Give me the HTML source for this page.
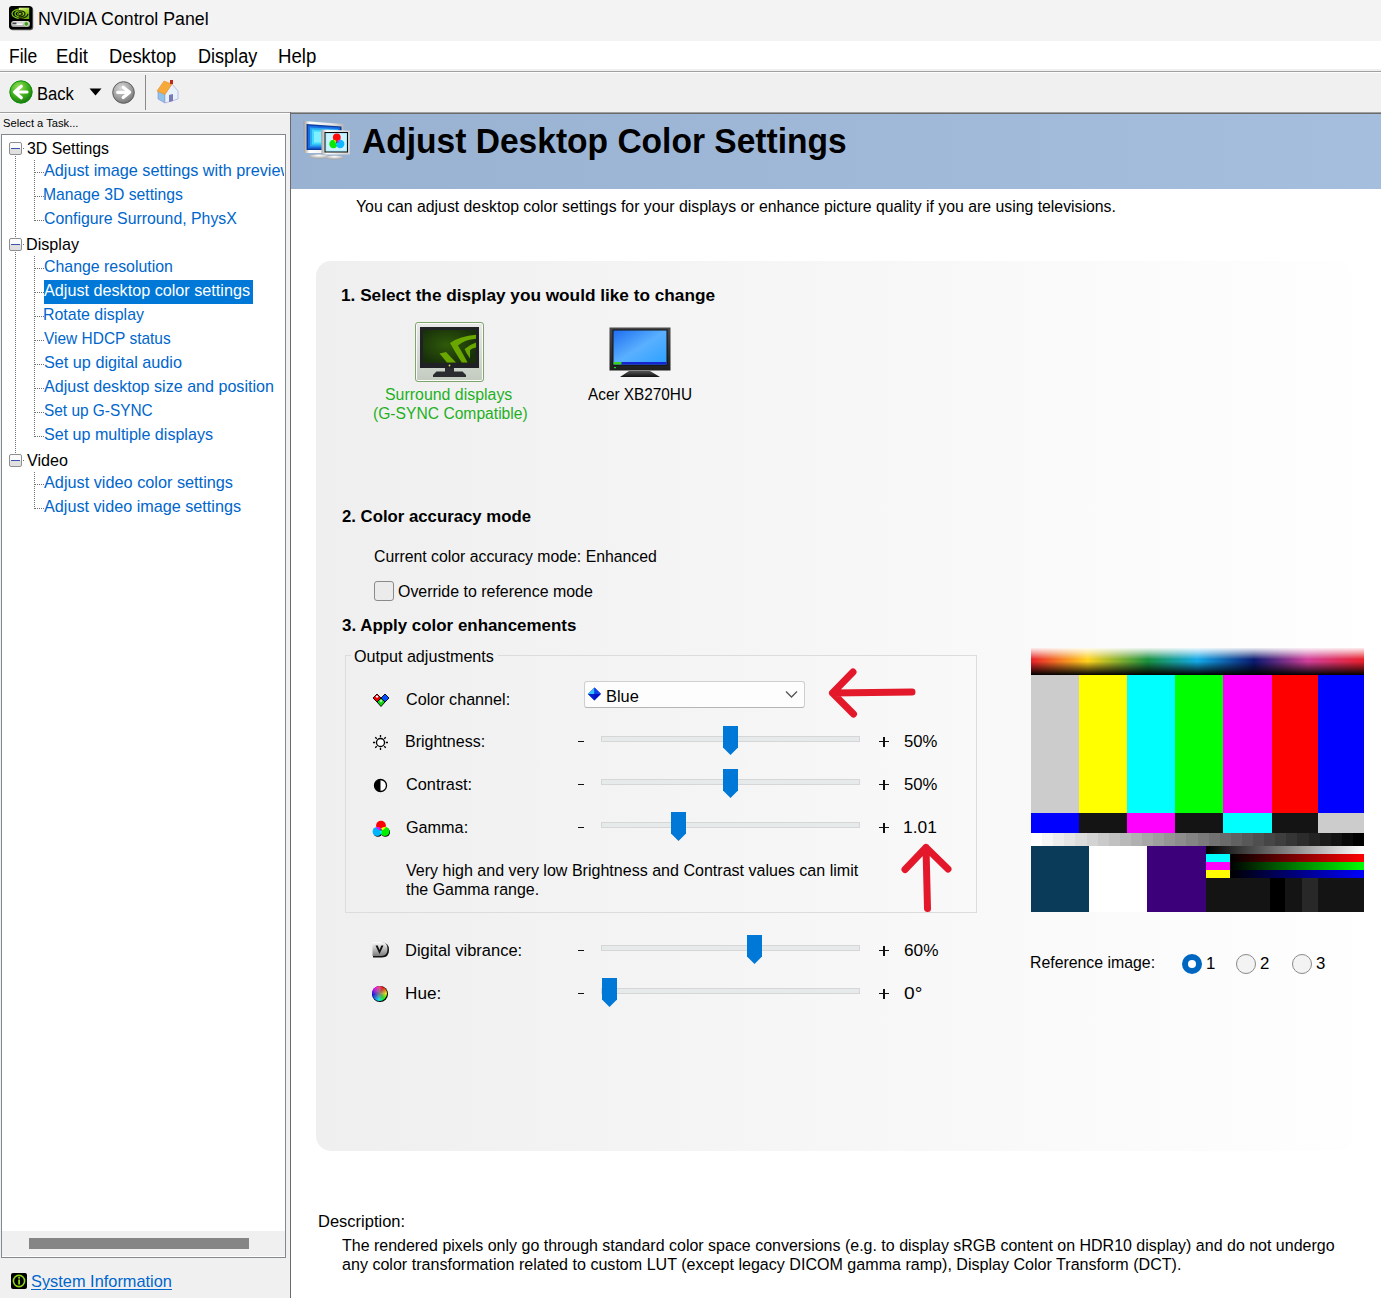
<!DOCTYPE html>
<html><head><meta charset="utf-8"><title>NVIDIA Control Panel</title>
<style>
html,body{margin:0;padding:0;}
body{width:1381px;height:1298px;overflow:hidden;position:relative;background:#f0f0f0;font-family:"Liberation Sans",sans-serif;}
.r{position:absolute;box-sizing:content-box;}
.t{position:absolute;white-space:nowrap;line-height:1;transform-origin:0 0;}
</style></head><body>
<div class="r" style="left:0px;top:0px;width:1381px;height:41px;background:#f3f3f3"></div>
<div class="r" style="left:0px;top:41px;width:1381px;height:28px;background:#fff"></div>
<div class="r" style="left:0px;top:69px;width:1381px;height:2px;background:#f0f0f0"></div>
<div class="r" style="left:0px;top:71px;width:1381px;height:1px;background:#a0a0a0"></div>
<div class="r" style="left:0px;top:72px;width:1381px;height:1px;background:#fdfdfd"></div>
<div class="r" style="left:0px;top:73px;width:1381px;height:39px;background:#f0f0f0"></div>
<div class="r" style="left:0px;top:112px;width:1381px;height:1px;background:#a0a0a0"></div>
<div class="r" style="left:0px;top:113px;width:290px;height:1px;background:#fdfdfd"></div>
<svg class="r" style="left:9px;top:6px" width="25" height="25" viewBox="0 0 25 25">
<defs><linearGradient id="nvb" x1="0" y1="0" x2="0.3" y2="1"><stop offset="0" stop-color="#e8f8b0"/><stop offset="0.45" stop-color="#9ad020"/><stop offset="1" stop-color="#6cb000"/></linearGradient>
<linearGradient id="nvg" x1="0" y1="0" x2="0" y2="1"><stop offset="0" stop-color="#e8e8e8"/><stop offset="1" stop-color="#a0a0a0"/></linearGradient>
<clipPath id="nvc"><rect x="9.8" y="1.7" width="10.4" height="11.3"/></clipPath>
<clipPath id="nvl"><rect x="1.5" y="1.7" width="8.3" height="11.3"/></clipPath></defs>
<rect x="0.8" y="0.8" width="23.4" height="23.4" rx="3" fill="#5a5a5a"/>
<rect x="0" y="0" width="23.2" height="23.2" rx="3" fill="#000"/>
<rect x="9.8" y="1.7" width="10.4" height="11.3" fill="url(#nvb)"/>
<g fill="none" stroke-width="1.3">
<g clip-path="url(#nvl)" stroke="#78c010"><ellipse cx="11" cy="7.8" rx="8" ry="4.6"/><ellipse cx="11" cy="7.8" rx="5" ry="3"/><ellipse cx="11" cy="7.8" rx="2.2" ry="1.5"/></g>
<g clip-path="url(#nvc)" stroke="#1a2400"><path d="M3 7.8 A8 4.6 0 0 0 19 7.8"/><ellipse cx="11" cy="7.8" rx="5" ry="3"/><ellipse cx="11" cy="7.8" rx="2.2" ry="1.5"/></g>
</g>
<rect x="2.2" y="15" width="18.7" height="6" rx="2.5" fill="url(#nvg)"/>
<rect x="3.5" y="16.5" width="4" height="1.5" fill="#444"/><rect x="7.5" y="17.5" width="6" height="1.5" fill="#fff"/>
<circle cx="17.3" cy="17.9" r="2.3" fill="#3aa020" stroke="#dde4b8" stroke-width="0.8"/>
</svg>
<span id="t0" class="t" style="left:38.1px;top:8.75px;font-size:19.20px;font-weight:400;color:#000;transform:scaleX(0.9247);">NVIDIA Control Panel</span>
<span id="t1" class="t" style="left:9.1px;top:47.49px;font-size:19.50px;font-weight:400;color:#000;transform:scaleX(0.8960);">File</span>
<span id="t2" class="t" style="left:56.1px;top:47.49px;font-size:19.50px;font-weight:400;color:#000;transform:scaleX(0.9493);">Edit</span>
<span id="t3" class="t" style="left:109.1px;top:47.49px;font-size:19.50px;font-weight:400;color:#000;transform:scaleX(0.9407);">Desktop</span>
<span id="t4" class="t" style="left:198.1px;top:47.49px;font-size:19.50px;font-weight:400;color:#000;transform:scaleX(0.9258);">Display</span>
<span id="t5" class="t" style="left:278.0px;top:47.49px;font-size:19.50px;font-weight:400;color:#000;transform:scaleX(0.9552);">Help</span>
<svg class="r" style="left:9px;top:80px" width="24" height="24" viewBox="0 0 24 24">
<defs><radialGradient id="gb" cx="40%" cy="30%" r="70%"><stop offset="0" stop-color="#9be35a"/><stop offset="0.6" stop-color="#3fae1c"/><stop offset="1" stop-color="#1c7a10"/></radialGradient></defs>
<circle cx="12" cy="12" r="11.2" fill="url(#gb)" stroke="#109010" stroke-width="1"/>
<path d="M5.6 12 L12.3 6.3 M5.6 12 L12.3 17.7 M5.6 12 L18 12" stroke="#fff" stroke-width="3.2" stroke-linecap="round" stroke-linejoin="round" fill="none"/>
</svg>
<span id="t6" class="t" style="left:36.6px;top:85.09px;font-size:18.80px;font-weight:400;color:#000;transform:scaleX(0.8824);">Back</span>
<svg class="r" style="left:89px;top:88px" width="13" height="8" viewBox="0 0 13 8"><path d="M0.5 0.5 L12.5 0.5 L6.5 7.5 Z" fill="#000"/></svg>
<svg class="r" style="left:112px;top:81px" width="23" height="23" viewBox="0 0 23 23">
<defs><radialGradient id="gg" cx="40%" cy="30%" r="75%"><stop offset="0" stop-color="#d8d8d8"/><stop offset="0.6" stop-color="#a0a0a0"/><stop offset="1" stop-color="#6e6e6e"/></radialGradient></defs>
<circle cx="11.5" cy="11.5" r="10.8" fill="url(#gg)" stroke="#5e5e5e" stroke-width="1"/>
<path d="M17.6 11.3 L11.2 6.2 M17.6 11.3 L11.2 16.6 M17.6 11.3 L5.6 11.3" stroke="#fff" stroke-width="3.2" stroke-linecap="round" stroke-linejoin="round" fill="none"/>
</svg>
<div class="r" style="left:145px;top:75px;width:1px;height:35px;background:#8a8a8a"></div>
<svg class="r" style="left:154.5px;top:79px" width="25" height="25" viewBox="0 0 25 25">
<path d="M3 12 L3 20 L10 24 L10 15 Z" fill="#8fc4ea" stroke="#8a8ad0" stroke-width="0.6"/>
<path d="M10 15 L10 24 L23 20 L23 12 L17 5 Z" fill="#e8f2fb" stroke="#9a9ad6" stroke-width="0.6"/>
<path d="M14 23 L14 16 L18 15 L18 22 Z" fill="#7a7ab8"/>
<path d="M2 12 L10 15.5 L17 5 L9 2 Z" fill="#f7a93a" stroke="#e08a20" stroke-width="0.5"/>
<rect x="15" y="1" width="3" height="4" fill="#c0281a"/>
</svg>
<span id="t7" class="t" style="left:2.5px;top:118.35px;font-size:11.40px;font-weight:400;color:#000;transform:scaleX(0.9796);">Select a Task...</span>
<div class="r" style="left:1px;top:134px;width:285px;height:1124px;background:#828790"></div>
<div class="r" style="left:2px;top:135px;width:283px;height:1122px;background:#fff"></div>
<div class="r" style="left:2px;top:1231px;width:283px;height:25px;background:#f0f0f0"></div>
<div class="r" style="left:29px;top:1238px;width:220px;height:11px;background:#858585"></div>
<svg class="r" style="left:11px;top:1273px" width="16" height="16" viewBox="0 0 16 16">
<rect x="0" y="0" width="16" height="16" rx="2" fill="#000"/>
<circle cx="8" cy="8" r="5.6" fill="none" stroke="#8ed61a" stroke-width="1.6"/>
<rect x="7.2" y="6.5" width="1.8" height="5" fill="#8ed61a"/><rect x="7.2" y="4" width="1.8" height="1.6" fill="#8ed61a"/>
</svg>
<span id="t8" class="t" style="left:30.5px;top:1272.61px;font-size:17.00px;font-weight:400;color:#0066cc;transform:scaleX(0.9624);text-decoration:underline;text-underline-offset:2px;">System Information</span>
<div class="r" style="left:9px;top:142px;width:11px;height:11px;border:1px solid #8e8f8f;border-radius:2px;background:linear-gradient(#fbfbfb,#fbfbfb 45%,#e0e0e0 55%,#e0e0e0)"></div>
<div class="r" style="left:11px;top:148px;width:9px;height:1px;background:#3a55b0"></div>
<div class="r" style="left:23px;top:148px;width:1px;height:1px;background:#707070"></div>
<span id="t9" class="t" style="left:27.0px;top:139.61px;font-size:17.00px;font-weight:400;color:#000;transform:scaleX(0.9327);">3D Settings</span>
<div class="r" style="left:34px;top:160px;width:1px;height:61px;background:repeating-linear-gradient(to bottom,#707070 0 1px,transparent 1px 2px)"></div>
<div class="r" style="left:35px;top:172px;width:9px;height:1px;background:repeating-linear-gradient(to right,#707070 0 1px,transparent 1px 2px)"></div>
<div class="r" style="left:44px;top:160px;width:240px;height:24px;overflow:hidden">
<span id="t10" class="t" style="left:-0.3px;top:1.61px;font-size:17.00px;font-weight:400;color:#0066cc;transform:scaleX(0.9550);">Adjust image settings with preview</span>
</div>
<div class="r" style="left:35px;top:196px;width:9px;height:1px;background:repeating-linear-gradient(to right,#707070 0 1px,transparent 1px 2px)"></div>
<span id="t11" class="t" style="left:42.8px;top:185.61px;font-size:17.00px;font-weight:400;color:#0066cc;transform:scaleX(0.9252);">Manage 3D settings</span>
<div class="r" style="left:35px;top:220px;width:9px;height:1px;background:repeating-linear-gradient(to right,#707070 0 1px,transparent 1px 2px)"></div>
<span id="t12" class="t" style="left:43.7px;top:209.61px;font-size:17.00px;font-weight:400;color:#0066cc;transform:scaleX(0.9317);">Configure Surround, PhysX</span>
<div class="r" style="left:9px;top:238px;width:11px;height:11px;border:1px solid #8e8f8f;border-radius:2px;background:linear-gradient(#fbfbfb,#fbfbfb 45%,#e0e0e0 55%,#e0e0e0)"></div>
<div class="r" style="left:11px;top:244px;width:9px;height:1px;background:#3a55b0"></div>
<div class="r" style="left:23px;top:244px;width:1px;height:1px;background:#707070"></div>
<span id="t13" class="t" style="left:26.0px;top:235.61px;font-size:17.00px;font-weight:400;color:#000;transform:scaleX(0.9504);">Display</span>
<div class="r" style="left:34px;top:256px;width:1px;height:181px;background:repeating-linear-gradient(to bottom,#707070 0 1px,transparent 1px 2px)"></div>
<div class="r" style="left:35px;top:268px;width:9px;height:1px;background:repeating-linear-gradient(to right,#707070 0 1px,transparent 1px 2px)"></div>
<span id="t14" class="t" style="left:43.7px;top:257.61px;font-size:17.00px;font-weight:400;color:#0066cc;transform:scaleX(0.9343);">Change resolution</span>
<div class="r" style="left:35px;top:292px;width:9px;height:1px;background:repeating-linear-gradient(to right,#707070 0 1px,transparent 1px 2px)"></div>
<div class="r" style="left:44px;top:280px;width:209px;height:24px;background:#0078d7"></div>
<span id="t15" class="t" style="left:43.7px;top:281.61px;font-size:17.00px;font-weight:400;color:#fff;transform:scaleX(0.9519);">Adjust desktop color settings</span>
<div class="r" style="left:35px;top:316px;width:9px;height:1px;background:repeating-linear-gradient(to right,#707070 0 1px,transparent 1px 2px)"></div>
<span id="t16" class="t" style="left:42.8px;top:305.61px;font-size:17.00px;font-weight:400;color:#0066cc;transform:scaleX(0.9373);">Rotate display</span>
<div class="r" style="left:35px;top:340px;width:9px;height:1px;background:repeating-linear-gradient(to right,#707070 0 1px,transparent 1px 2px)"></div>
<span id="t17" class="t" style="left:43.7px;top:329.61px;font-size:17.00px;font-weight:400;color:#0066cc;transform:scaleX(0.9100);">View HDCP status</span>
<div class="r" style="left:35px;top:364px;width:9px;height:1px;background:repeating-linear-gradient(to right,#707070 0 1px,transparent 1px 2px)"></div>
<span id="t18" class="t" style="left:43.7px;top:353.61px;font-size:17.00px;font-weight:400;color:#0066cc;transform:scaleX(0.9538);">Set up digital audio</span>
<div class="r" style="left:35px;top:388px;width:9px;height:1px;background:repeating-linear-gradient(to right,#707070 0 1px,transparent 1px 2px)"></div>
<span id="t19" class="t" style="left:43.7px;top:377.61px;font-size:17.00px;font-weight:400;color:#0066cc;transform:scaleX(0.9467);">Adjust desktop size and position</span>
<div class="r" style="left:35px;top:412px;width:9px;height:1px;background:repeating-linear-gradient(to right,#707070 0 1px,transparent 1px 2px)"></div>
<span id="t20" class="t" style="left:43.7px;top:401.61px;font-size:17.00px;font-weight:400;color:#0066cc;transform:scaleX(0.9063);">Set up G-SYNC</span>
<div class="r" style="left:35px;top:436px;width:9px;height:1px;background:repeating-linear-gradient(to right,#707070 0 1px,transparent 1px 2px)"></div>
<span id="t21" class="t" style="left:43.7px;top:425.61px;font-size:17.00px;font-weight:400;color:#0066cc;transform:scaleX(0.9461);">Set up multiple displays</span>
<div class="r" style="left:9px;top:454px;width:11px;height:11px;border:1px solid #8e8f8f;border-radius:2px;background:linear-gradient(#fbfbfb,#fbfbfb 45%,#e0e0e0 55%,#e0e0e0)"></div>
<div class="r" style="left:11px;top:460px;width:9px;height:1px;background:#3a55b0"></div>
<div class="r" style="left:23px;top:460px;width:1px;height:1px;background:#707070"></div>
<span id="t22" class="t" style="left:27.0px;top:451.61px;font-size:17.00px;font-weight:400;color:#000;transform:scaleX(0.9481);">Video</span>
<div class="r" style="left:34px;top:472px;width:1px;height:37px;background:repeating-linear-gradient(to bottom,#707070 0 1px,transparent 1px 2px)"></div>
<div class="r" style="left:35px;top:484px;width:9px;height:1px;background:repeating-linear-gradient(to right,#707070 0 1px,transparent 1px 2px)"></div>
<span id="t23" class="t" style="left:43.7px;top:473.61px;font-size:17.00px;font-weight:400;color:#0066cc;transform:scaleX(0.9569);">Adjust video color settings</span>
<div class="r" style="left:35px;top:508px;width:9px;height:1px;background:repeating-linear-gradient(to right,#707070 0 1px,transparent 1px 2px)"></div>
<span id="t24" class="t" style="left:43.7px;top:497.61px;font-size:17.00px;font-weight:400;color:#0066cc;transform:scaleX(0.9518);">Adjust video image settings</span>
<div class="r" style="left:15px;top:156px;width:1px;height:82px;background:repeating-linear-gradient(to bottom,#707070 0 1px,transparent 1px 2px)"></div>
<div class="r" style="left:15px;top:252px;width:1px;height:202px;background:repeating-linear-gradient(to bottom,#707070 0 1px,transparent 1px 2px)"></div>
<div class="r" style="left:290px;top:112px;width:1px;height:1186px;background:#6b6b6b"></div>
<div class="r" style="left:291px;top:113px;width:1090px;height:1px;background:#6b6b6b"></div>
<div class="r" style="left:291px;top:114px;width:1090px;height:1184px;background:#fff"></div>
<div class="r" style="left:291px;top:114px;width:1090px;height:75px;background:linear-gradient(to right,#99b2d2,#a6bedd)"></div>
<svg class="r" style="left:300px;top:118px" width="55" height="45" viewBox="0 0 55 45">
<defs>
<linearGradient id="frm" x1="0" y1="0" x2="1" y2="0"><stop offset="0" stop-color="#9a9a9a"/><stop offset="0.15" stop-color="#ffffff"/><stop offset="0.7" stop-color="#e6e6e6"/><stop offset="1" stop-color="#b8b8b8"/></linearGradient>
<linearGradient id="frm2" x1="0" y1="0" x2="1" y2="0"><stop offset="0" stop-color="#a0a0a0"/><stop offset="0.2" stop-color="#ffffff"/><stop offset="1" stop-color="#cfcfcf"/></linearGradient>
<radialGradient id="stnd" cx="50%" cy="30%" r="60%"><stop offset="0" stop-color="#ffffff"/><stop offset="1" stop-color="#a8a8a8"/></radialGradient>
</defs>
<ellipse cx="19" cy="38.5" rx="10" ry="2.2" fill="url(#stnd)"/>
<path d="M3.5 3 L43.5 6 L43.5 35 L4 35 Z" fill="url(#frm)"/>
<path d="M6.5 6 L41.5 8.5 L41.5 32 L6.5 32 Z" fill="#0a3a9a"/>
<path d="M8 7.5 L40 9.5 L40 30.5 L8 30.5 Z" fill="#1a6ae0"/>
<path d="M10 9.5 L38 11 L38 28.5 L10 28.5 Z" fill="#2aa8f0"/>
<path d="M12 11.5 L36 12.5 L36 26.5 L12 26.5 Z" fill="#3fd8ff"/>
<path d="M14 13.5 L34 14 L34 24.5 L14 24.5 Z" fill="#7ff0ff"/>
<ellipse cx="34.5" cy="39.5" rx="9" ry="2" fill="url(#stnd)"/>
<path d="M21 11.5 L50 12.5 L50 36.5 L21.5 36.5 Z" fill="url(#frm2)"/>
<rect x="24.5" y="14" width="23.5" height="20.5" fill="#0c0c0c"/>
<rect x="25.5" y="15" width="21.5" height="18.5" fill="#a8e8fa"/>
<rect x="26.5" y="16" width="19.5" height="16.5" fill="#c8f4ff"/>
<circle cx="36.8" cy="19.5" r="3.9" fill="#ff0a0a"/>
<circle cx="33.5" cy="26" r="4.2" fill="#08e808"/>
<circle cx="40.2" cy="26" r="4.2" fill="#10b8ff"/>
<path d="M33.5 21.8 A4.2 4.2 0 0 1 36.5 23.2 L35.5 25 Z" fill="#e0e000"/>
<path d="M40 21.8 A4.2 4.2 0 0 0 37 23.2 L38 25 Z" fill="#ff10ff"/>
<path d="M35.5 25.5 L38 25.5 L36.8 27.5 Z" fill="#00e8e8"/>
<path d="M35.8 23.5 L37.8 23.5 L36.8 25.5 Z" fill="#333"/>
</svg>
<span id="t25" class="t" style="left:362.0px;top:123.80px;font-size:34.50px;font-weight:700;color:#000;transform:scaleX(0.9725);">Adjust Desktop Color Settings</span>
<span id="t26" class="t" style="left:355.5px;top:199.46px;font-size:16.00px;font-weight:400;color:#000;transform:scaleX(0.9885);">You can adjust desktop color settings for your displays or enhance picture quality if you are using televisions.</span>
<div class="r" style="left:316px;top:261px;width:1036px;height:890px;border-radius:15px;background:linear-gradient(to right,#efefef,#fefefe)"></div>
<span id="t27" class="t" style="left:341.0px;top:286.61px;font-size:17.00px;font-weight:700;color:#000;transform:scaleX(1.0125);">1. Select the display you would like to change</span>
<div class="r" style="left:415px;top:322px;width:67px;height:58px;border:1px solid #7fa56b;border-radius:3px;box-shadow:inset 0 0 0 1px #fafafa;background:linear-gradient(#e8e8e8,#c3cbbf)"></div>
<svg class="r" style="left:420px;top:327px" width="60" height="51" viewBox="0 0 60 51">
<defs><radialGradient id="ng" cx="45%" cy="45%" r="60%"><stop offset="0" stop-color="#2f5a0a"/><stop offset="1" stop-color="#18300a"/></radialGradient></defs>
<rect x="0" y="0" width="59" height="41" fill="#1f2124"/>
<rect x="3" y="3" width="53" height="33" fill="url(#ng)"/>
<g fill="#6aa600">
<path d="M19.5 26.5 L26 25 L36 35.5 L27 35.5 Z"/>
<path d="M30 16 Q40 9 56 7.8 L56 11.8 Q45 12.5 38 18.6 Q43 27 47.6 35.5 L41.7 35.5 Q35 25 30 16 Z"/>
<path d="M44.6 21.9 Q49 18 56 15.5 L56 20.6 Q52 21.5 50 23 Q50 27 50 31.5 Q46 26 44.6 21.9 Z"/>
</g>
<circle cx="29.5" cy="38.5" r="0.9" fill="#c8e060"/>
<rect x="25" y="41" width="9" height="4" fill="#2a2c30"/>
<path d="M13 50 L13 48 L16.5 44.5 L42.5 44.5 L46 48 L46 50 Z" fill="#2a2c30"/>
</svg>
<span id="t28" class="t" style="left:384.5px;top:387.29px;font-size:15.60px;font-weight:400;color:#1fb01f;transform:scaleX(1.0198);">Surround displays</span>
<span id="t29" class="t" style="left:372.5px;top:406.29px;font-size:15.60px;font-weight:400;color:#1fb01f;transform:scaleX(1.0029);">(G-SYNC Compatible)</span>
<svg class="r" style="left:609px;top:327px" width="62" height="51" viewBox="0 0 62 51">
<defs><linearGradient id="bl" x1="0" y1="0" x2="1" y2="1"><stop offset="0" stop-color="#1f6ff0"/><stop offset="0.5" stop-color="#5ab0ff"/><stop offset="1" stop-color="#2aa0ff"/></linearGradient>
<linearGradient id="bz" x1="0" y1="0" x2="0" y2="1"><stop offset="0" stop-color="#4a4a4a"/><stop offset="1" stop-color="#1e1e1e"/></linearGradient>
<linearGradient id="st" x1="0" y1="0" x2="0" y2="1"><stop offset="0" stop-color="#555"/><stop offset="1" stop-color="#111"/></linearGradient></defs>
<rect x="0.5" y="0.5" width="61" height="43" fill="url(#bz)"/>
<rect x="3.5" y="2.5" width="55" height="36" fill="#111"/>
<rect x="4.5" y="3.5" width="53" height="34" fill="url(#bl)"/>
<rect x="4.5" y="35" width="53" height="2.5" fill="#1424d0"/>
<rect x="4.5" y="35" width="8" height="2.5" fill="#3ad21a"/>
<rect x="5" y="40" width="2" height="1.2" fill="#18e018"/>
<path d="M20 44 L41 44 L51 50 L11 50 Z" fill="url(#st)"/>
</svg>
<span id="t30" class="t" style="left:588.0px;top:386.96px;font-size:16.00px;font-weight:400;color:#000;transform:scaleX(0.9589);">Acer XB270HU</span>
<span id="t31" class="t" style="left:342.0px;top:507.61px;font-size:17.00px;font-weight:700;color:#000;transform:scaleX(0.9851);">2. Color accuracy mode</span>
<span id="t32" class="t" style="left:374.0px;top:549.28px;font-size:16.80px;font-weight:400;color:#000;transform:scaleX(0.9416);">Current color accuracy mode: Enhanced</span>
<div class="r" style="left:374px;top:581px;width:18px;height:18px;border:1px solid #8a8a8a;border-radius:3px;background:#ebebeb"></div>
<span id="t33" class="t" style="left:398.0px;top:583.78px;font-size:16.80px;font-weight:400;color:#000;transform:scaleX(0.9494);">Override to reference mode</span>
<span id="t34" class="t" style="left:342.0px;top:616.61px;font-size:17.00px;font-weight:700;color:#000;transform:scaleX(0.9948);">3. Apply color enhancements</span>
<div class="r" style="left:345px;top:655px;width:630px;height:256px;border:1px solid #dcdcdc"></div>
<div class="r" style="left:351px;top:650px;width:147px;height:10px;background:linear-gradient(to right,#f0f0f0,#f2f2f2)"></div>
<span id="t35" class="t" style="left:354.0px;top:648.78px;font-size:16.80px;font-weight:400;color:#000;transform:scaleX(0.9612);">Output adjustments</span>
<svg class="r" style="left:372px;top:693px" width="18" height="15" viewBox="0 0 18 15">
<path d="M5 1 L9 5 L5 9 L1 5 Z" fill="#e00" stroke="#000" stroke-width="0.9"/>
<path d="M5 2.2 L6.5 3.7 L5 5 L3.5 3.7Z" fill="#fff"/>
<path d="M13 1 L17 5 L13 9 L9 5 Z" fill="#0050ff" stroke="#000" stroke-width="0.9"/>
<path d="M9 5 L13 9 L9 13.5 L5 9 Z" fill="#10d010" stroke="#000" stroke-width="0.9"/>
<path d="M9 6.5 L10.5 8 L9 9.5 L7.5 8Z" fill="#b0ffb0"/>
</svg>
<span id="t36" class="t" style="left:406.0px;top:691.78px;font-size:16.80px;font-weight:400;color:#000;transform:scaleX(0.9624);">Color channel:</span>
<div class="r" style="left:584px;top:681px;width:219px;height:25px;border:1px solid #cfcfcf;border-bottom-color:#b5b5b5;border-radius:3px;background:#fdfdfd"></div>
<svg class="r" style="left:587px;top:687px" width="15" height="15" viewBox="0 0 15 15">
<path d="M7.5 0.5 L14 7 L7.5 13.5 L1 7 Z" fill="#0010c0"/>
<path d="M7.5 0.5 L7.5 7 L1 7 Z" fill="#30c0ff"/>
<path d="M7.5 0.5 L14 7 L7.5 7 Z" fill="#1040f0"/>
<path d="M1 7 L7.5 7 L7.5 13.5 Z" fill="#0020d0"/>
</svg>
<span id="t37" class="t" style="left:605.5px;top:688.78px;font-size:16.80px;font-weight:400;color:#000;transform:scaleX(0.9766);">Blue</span>
<svg class="r" style="left:785px;top:690px" width="13" height="9" viewBox="0 0 13 9"><path d="M1 1.5 L6.5 7 L12 1.5" fill="none" stroke="#555" stroke-width="1.3"/></svg>
<svg class="r" style="left:372px;top:734px" width="17" height="17" viewBox="0 0 17 17">
<circle cx="8.5" cy="8.5" r="4" fill="#fff" stroke="#000" stroke-width="1.3"/>
<g stroke="#000" stroke-width="1.3"><path d="M8.5 1 V3.2 M8.5 13.8 V16 M1 8.5 H3.2 M13.8 8.5 H16 M3.2 3.2 L4.8 4.8 M12.2 12.2 L13.8 13.8 M3.2 13.8 L4.8 12.2 M12.2 4.8 L13.8 3.2"/></g></svg>
<span id="t38" class="t" style="left:405.3px;top:733.78px;font-size:16.80px;font-weight:400;color:#000;transform:scaleX(0.9540);">Brightness:</span>
<div class="r" style="left:578px;top:741px;width:6px;height:1.4px;background:#111"></div>
<div class="r" style="left:601px;top:736px;width:257px;height:4px;border:1px solid #d6d6d6;background:#e7eaea"></div>
<svg class="r" style="left:723px;top:726px" width="15" height="29" viewBox="0 0 15 29"><path d="M0 0 H15 V21.5 L7.5 29 L0 21.5 Z" fill="#0078d7"/></svg>
<div class="r" style="left:879px;top:741.2px;width:10px;height:1.3px;background:#111"></div>
<div class="r" style="left:883.3px;top:737px;width:1.3px;height:10px;background:#111"></div>
<span id="t39" class="t" style="left:903.5px;top:733.78px;font-size:16.80px;font-weight:400;color:#000;transform:scaleX(0.9951);">50%</span>
<svg class="r" style="left:373px;top:778px" width="15" height="15" viewBox="0 0 15 15">
<circle cx="7.5" cy="7.5" r="6" fill="#fff" stroke="#000" stroke-width="1.3"/>
<path d="M7.5 1.5 A6 6 0 0 0 7.5 13.5 Z" fill="#000"/></svg>
<span id="t40" class="t" style="left:406.3px;top:776.78px;font-size:16.80px;font-weight:400;color:#000;transform:scaleX(0.9715);">Contrast:</span>
<div class="r" style="left:578px;top:784px;width:6px;height:1.4px;background:#111"></div>
<div class="r" style="left:601px;top:779px;width:257px;height:4px;border:1px solid #d6d6d6;background:#e7eaea"></div>
<svg class="r" style="left:723px;top:769px" width="15" height="29" viewBox="0 0 15 29"><path d="M0 0 H15 V21.5 L7.5 29 L0 21.5 Z" fill="#0078d7"/></svg>
<div class="r" style="left:879px;top:784.2px;width:10px;height:1.3px;background:#111"></div>
<div class="r" style="left:883.3px;top:780px;width:1.3px;height:10px;background:#111"></div>
<span id="t41" class="t" style="left:903.5px;top:776.78px;font-size:16.80px;font-weight:400;color:#000;transform:scaleX(0.9951);">50%</span>
<svg class="r" style="left:372px;top:820px" width="19" height="18" viewBox="0 0 19 18">
<defs><clipPath id="cR"><circle cx="9" cy="5.6" r="4.9"/></clipPath><clipPath id="cB"><circle cx="5.2" cy="11.5" r="4.6"/></clipPath></defs>
<circle cx="5.9" cy="12.2" r="4.6" fill="#000"/><circle cx="13.4" cy="12.2" r="4.6" fill="#000"/>
<circle cx="9" cy="5.6" r="4.9" fill="#ff0000"/>
<circle cx="5.2" cy="11.5" r="4.6" fill="#00b4ff"/>
<circle cx="12.8" cy="11.5" r="4.6" fill="#00f000"/>
<g clip-path="url(#cR)"><circle cx="5.2" cy="11.5" r="4.6" fill="#ff00ff"/><circle cx="12.8" cy="11.5" r="4.6" fill="#ffff00"/></g>
<g clip-path="url(#cB)"><circle cx="12.8" cy="11.5" r="4.6" fill="#00ffff"/></g>
<path d="M7.6 10.6 L9 8.4 L10.4 10.6 Z" fill="#404040"/>
</svg>
<span id="t42" class="t" style="left:406.3px;top:819.78px;font-size:16.80px;font-weight:400;color:#000;transform:scaleX(0.9658);">Gamma:</span>
<div class="r" style="left:578px;top:827px;width:6px;height:1.4px;background:#111"></div>
<div class="r" style="left:601px;top:822px;width:257px;height:4px;border:1px solid #d6d6d6;background:#e7eaea"></div>
<svg class="r" style="left:671px;top:812px" width="15" height="29" viewBox="0 0 15 29"><path d="M0 0 H15 V21.5 L7.5 29 L0 21.5 Z" fill="#0078d7"/></svg>
<div class="r" style="left:879px;top:827.2px;width:10px;height:1.3px;background:#111"></div>
<div class="r" style="left:883.3px;top:823px;width:1.3px;height:10px;background:#111"></div>
<span id="t43" class="t" style="left:902.5px;top:819.78px;font-size:16.80px;font-weight:400;color:#000;transform:scaleX(1.0374);">1.01</span>
<span id="t44" class="t" style="left:406.0px;top:862.78px;font-size:16.80px;font-weight:400;color:#000;transform:scaleX(0.9562);">Very high and very low Brightness and Contrast values can limit</span>
<span id="t45" class="t" style="left:406.0px;top:881.78px;font-size:16.80px;font-weight:400;color:#000;transform:scaleX(0.9515);">the Gamma range.</span>
<svg class="r" style="left:372px;top:941px" width="18" height="18" viewBox="0 0 18 18">
<defs><linearGradient id="dvg" x1="0" y1="0" x2="0" y2="1"><stop offset="0" stop-color="#ffffff"/><stop offset="1" stop-color="#7a7a7a"/></linearGradient></defs>
<path d="M1 1.5 H10 Q17 1.5 17 9 Q17 16.5 10 16.5 H1 Z" fill="#111"/>
<path d="M0.5 1 H9.5 Q15.5 1 15.5 8 Q15.5 15 9.5 15 H0.5 Z" fill="url(#dvg)"/>
<path d="M3.5 4.5 L7.5 13 L11.5 4.5 H9.3 L7.5 9 L5.7 4.5 Z" fill="#111"/>
</svg>
<span id="t46" class="t" style="left:405.3px;top:942.78px;font-size:16.80px;font-weight:400;color:#000;transform:scaleX(0.9811);">Digital vibrance:</span>
<div class="r" style="left:578px;top:950px;width:6px;height:1.4px;background:#111"></div>
<div class="r" style="left:601px;top:945px;width:257px;height:4px;border:1px solid #d6d6d6;background:#e7eaea"></div>
<svg class="r" style="left:747px;top:935px" width="15" height="29" viewBox="0 0 15 29"><path d="M0 0 H15 V21.5 L7.5 29 L0 21.5 Z" fill="#0078d7"/></svg>
<div class="r" style="left:879px;top:950.2px;width:10px;height:1.3px;background:#111"></div>
<div class="r" style="left:883.3px;top:946px;width:1.3px;height:10px;background:#111"></div>
<span id="t47" class="t" style="left:903.5px;top:942.78px;font-size:16.80px;font-weight:400;color:#000;transform:scaleX(1.0248);">60%</span>
<div class="r" style="left:372px;top:986px;width:16px;height:16px;border-radius:50%;background:#000"></div>
<div class="r" style="left:372px;top:986px;width:15px;height:15px;border-radius:50%;background:radial-gradient(circle,rgba(128,128,128,1) 0,rgba(128,128,128,0.55) 35%,rgba(128,128,128,0) 75%),conic-gradient(#ff4080 0deg,#ff0000 30deg,#ffff00 90deg,#00ff00 140deg,#00ffff 185deg,#0000ff 260deg,#ff00ff 320deg,#ff4080 360deg)"></div>
<span id="t48" class="t" style="left:405.3px;top:985.78px;font-size:16.80px;font-weight:400;color:#000;transform:scaleX(1.0212);">Hue:</span>
<div class="r" style="left:578px;top:993px;width:6px;height:1.4px;background:#111"></div>
<div class="r" style="left:601px;top:988px;width:257px;height:4px;border:1px solid #d6d6d6;background:#e7eaea"></div>
<svg class="r" style="left:602px;top:978px" width="15" height="29" viewBox="0 0 15 29"><path d="M0 0 H15 V21.5 L7.5 29 L0 21.5 Z" fill="#0078d7"/></svg>
<div class="r" style="left:879px;top:993.2px;width:10px;height:1.3px;background:#111"></div>
<div class="r" style="left:883.3px;top:989px;width:1.3px;height:10px;background:#111"></div>
<span id="t49" class="t" style="left:903.5px;top:985.78px;font-size:16.80px;font-weight:400;color:#000;transform:scaleX(1.1413);">0°</span>
<div class="r" style="left:1031px;top:648px;width:333px;height:27px;background:linear-gradient(to bottom,rgba(255,255,255,0.92) 0%,rgba(255,255,255,0.55) 18%,rgba(255,255,255,0) 42%,rgba(0,0,0,0) 50%,rgba(0,0,0,0.45) 72%,rgba(0,0,0,1) 100%),linear-gradient(to right,#e8202a,#ffd21e 17%,#1a9040 35%,#14a8e8 50%,#0a1a70 67%,#d0409a 83%,#e8202a)"></div>
<div class="r" style="left:1031px;top:675px;width:48px;height:138px;background:#cccccc"></div>
<div class="r" style="left:1031px;top:813px;width:48px;height:20px;background:#0000ff"></div>
<div class="r" style="left:1079px;top:675px;width:48px;height:138px;background:#ffff00"></div>
<div class="r" style="left:1079px;top:813px;width:48px;height:20px;background:#141414"></div>
<div class="r" style="left:1127px;top:675px;width:48px;height:138px;background:#00ffff"></div>
<div class="r" style="left:1127px;top:813px;width:48px;height:20px;background:#ff00ff"></div>
<div class="r" style="left:1175px;top:675px;width:48px;height:138px;background:#00ff00"></div>
<div class="r" style="left:1175px;top:813px;width:48px;height:20px;background:#141414"></div>
<div class="r" style="left:1223px;top:675px;width:49px;height:138px;background:#ff00ff"></div>
<div class="r" style="left:1223px;top:813px;width:49px;height:20px;background:#00ffff"></div>
<div class="r" style="left:1272px;top:675px;width:46px;height:138px;background:#ff0000"></div>
<div class="r" style="left:1272px;top:813px;width:46px;height:20px;background:#141414"></div>
<div class="r" style="left:1318px;top:675px;width:46px;height:138px;background:#0000ff"></div>
<div class="r" style="left:1318px;top:813px;width:46px;height:20px;background:#cccccc"></div>
<div class="r" style="left:1031.00px;top:833px;width:11.60px;height:13px;background:rgb(255,255,255)"></div>
<div class="r" style="left:1042.10px;top:833px;width:11.60px;height:13px;background:rgb(246,246,246)"></div>
<div class="r" style="left:1053.20px;top:833px;width:11.60px;height:13px;background:rgb(237,237,237)"></div>
<div class="r" style="left:1064.30px;top:833px;width:11.60px;height:13px;background:rgb(229,229,229)"></div>
<div class="r" style="left:1075.40px;top:833px;width:11.60px;height:13px;background:rgb(220,220,220)"></div>
<div class="r" style="left:1086.50px;top:833px;width:11.60px;height:13px;background:rgb(211,211,211)"></div>
<div class="r" style="left:1097.60px;top:833px;width:11.60px;height:13px;background:rgb(202,202,202)"></div>
<div class="r" style="left:1108.70px;top:833px;width:11.60px;height:13px;background:rgb(193,193,193)"></div>
<div class="r" style="left:1119.80px;top:833px;width:11.60px;height:13px;background:rgb(185,185,185)"></div>
<div class="r" style="left:1130.90px;top:833px;width:11.60px;height:13px;background:rgb(176,176,176)"></div>
<div class="r" style="left:1142.00px;top:833px;width:11.60px;height:13px;background:rgb(167,167,167)"></div>
<div class="r" style="left:1153.10px;top:833px;width:11.60px;height:13px;background:rgb(158,158,158)"></div>
<div class="r" style="left:1164.20px;top:833px;width:11.60px;height:13px;background:rgb(149,149,149)"></div>
<div class="r" style="left:1175.30px;top:833px;width:11.60px;height:13px;background:rgb(141,141,141)"></div>
<div class="r" style="left:1186.40px;top:833px;width:11.60px;height:13px;background:rgb(132,132,132)"></div>
<div class="r" style="left:1197.50px;top:833px;width:11.60px;height:13px;background:rgb(123,123,123)"></div>
<div class="r" style="left:1208.60px;top:833px;width:11.60px;height:13px;background:rgb(114,114,114)"></div>
<div class="r" style="left:1219.70px;top:833px;width:11.60px;height:13px;background:rgb(106,106,106)"></div>
<div class="r" style="left:1230.80px;top:833px;width:11.60px;height:13px;background:rgb(97,97,97)"></div>
<div class="r" style="left:1241.90px;top:833px;width:11.60px;height:13px;background:rgb(88,88,88)"></div>
<div class="r" style="left:1253.00px;top:833px;width:11.60px;height:13px;background:rgb(79,79,79)"></div>
<div class="r" style="left:1264.10px;top:833px;width:11.60px;height:13px;background:rgb(70,70,70)"></div>
<div class="r" style="left:1275.20px;top:833px;width:11.60px;height:13px;background:rgb(62,62,62)"></div>
<div class="r" style="left:1286.30px;top:833px;width:11.60px;height:13px;background:rgb(53,53,53)"></div>
<div class="r" style="left:1297.40px;top:833px;width:11.60px;height:13px;background:rgb(44,44,44)"></div>
<div class="r" style="left:1308.50px;top:833px;width:11.60px;height:13px;background:rgb(35,35,35)"></div>
<div class="r" style="left:1319.60px;top:833px;width:11.60px;height:13px;background:rgb(26,26,26)"></div>
<div class="r" style="left:1330.70px;top:833px;width:11.60px;height:13px;background:rgb(18,18,18)"></div>
<div class="r" style="left:1341.80px;top:833px;width:11.60px;height:13px;background:rgb(9,9,9)"></div>
<div class="r" style="left:1352.90px;top:833px;width:11.60px;height:13px;background:rgb(0,0,0)"></div>
<div class="r" style="left:1031px;top:846px;width:58px;height:66px;background:#0a3c5a"></div>
<div class="r" style="left:1089px;top:846px;width:58px;height:66px;background:#ffffff"></div>
<div class="r" style="left:1147px;top:846px;width:59px;height:66px;background:#3c007a"></div>
<div class="r" style="left:1206px;top:846px;width:158px;height:66px;background:#141414"></div>
<div class="r" style="left:1206px;top:846px;width:158px;height:8px;background:linear-gradient(to right,#000,#fff)"></div>
<div class="r" style="left:1206px;top:854px;width:24px;height:8px;background:#00ffff"></div>
<div class="r" style="left:1206px;top:862px;width:24px;height:8px;background:#ff00ff"></div>
<div class="r" style="left:1206px;top:870px;width:24px;height:8px;background:#ffff00"></div>
<div class="r" style="left:1230px;top:854px;width:134px;height:8px;background:linear-gradient(to right,#000,#ff0000)"></div>
<div class="r" style="left:1230px;top:862px;width:134px;height:8px;background:linear-gradient(to right,#000,#00ff00)"></div>
<div class="r" style="left:1230px;top:870px;width:134px;height:8px;background:linear-gradient(to right,#000,#0000ff)"></div>
<div class="r" style="left:1270px;top:878px;width:15px;height:34px;background:#000"></div>
<div class="r" style="left:1302px;top:878px;width:16px;height:34px;background:#282828"></div>
<span id="t50" class="t" style="left:1030.1px;top:955.28px;font-size:16.80px;font-weight:400;color:#000;transform:scaleX(0.9442);">Reference image:</span>
<div class="r" style="left:1182px;top:954px;width:20px;height:20px;border-radius:50%;background:#0067c0"></div>
<div class="r" style="left:1188px;top:960px;width:8px;height:8px;border-radius:50%;background:#fff"></div>
<span id="t51" class="t" style="left:1206.0px;top:955.78px;font-size:16.80px;font-weight:400;color:#000;">1</span>
<div class="r" style="left:1236px;top:954px;width:18px;height:18px;border:1px solid #8a8a8a;border-radius:50%;background:#f3f3f3"></div>
<span id="t52" class="t" style="left:1260.0px;top:955.78px;font-size:16.80px;font-weight:400;color:#000;">2</span>
<div class="r" style="left:1292px;top:954px;width:18px;height:18px;border:1px solid #8a8a8a;border-radius:50%;background:#f3f3f3"></div>
<span id="t53" class="t" style="left:1316.0px;top:955.78px;font-size:16.80px;font-weight:400;color:#000;">3</span>
<span id="t54" class="t" style="left:318.0px;top:1213.20px;font-size:16.30px;font-weight:400;color:#000;transform:scaleX(1.0126);">Description:</span>
<span id="t55" class="t" style="left:341.5px;top:1237.20px;font-size:16.30px;font-weight:400;color:#000;transform:scaleX(0.9818);">The rendered pixels only go through standard color space conversions (e.g. to display sRGB content on HDR10 display) and do not undergo</span>
<span id="t56" class="t" style="left:341.5px;top:1255.70px;font-size:16.30px;font-weight:400;color:#000;transform:scaleX(0.9873);">any color transformation related to custom LUT (except legacy DICOM gamma ramp), Display Color Transform (DCT).</span>
<svg class="r" style="left:0;top:0" width="1381" height="1298" viewBox="0 0 1381 1298">
<g stroke="#e3192b" stroke-width="7" stroke-linecap="round" stroke-linejoin="round" fill="none">
<path d="M853 672 L832.5 693 L853.5 714 M832.5 693 L912 692"/>
<path d="M905 869.5 L926 847.5 L948 869 M926 847.5 L927.5 908.5"/>
</g></svg>
</body></html>
